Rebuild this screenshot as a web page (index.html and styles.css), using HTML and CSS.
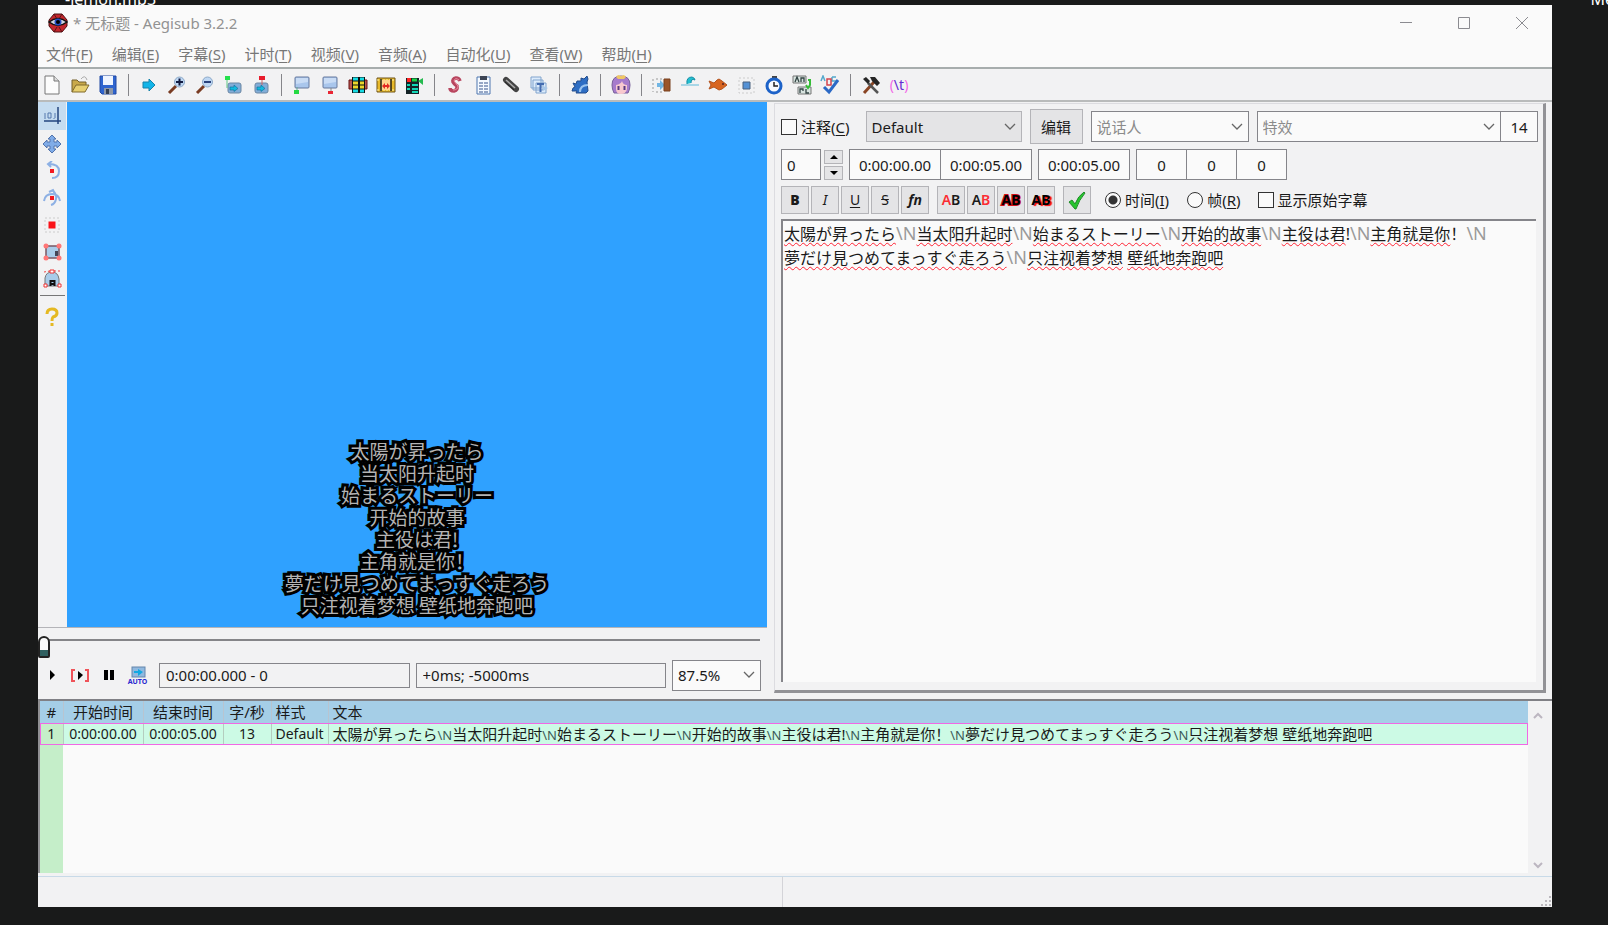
FILE: index.html
```html
<!DOCTYPE html>
<html lang="zh-CN">
<head>
<meta charset="utf-8">
<title>* 无标题 - Aegisub 3.2.2</title>
<link rel="stylesheet" href="styles.css">
</head>
<body>
<span class="desktop-label label-left">-lemon.mp3</span>
<span class="desktop-label label-right">Me</span>
<div class="window">
  <header class="titlebar">
    <svg class="logo" viewBox="0 0 20 20"><path d="M6 1h8l5 6v6l-5 6H6l-5-6V7z" fill="#c3262c" stroke="#4c1013"/><path d="M6 1l3 5M14 1l-3 5M6 19l3-5M14 19l-3-5" stroke="#5b1518"/><path d="M1 9q9-7 18 0-9 7-18 0z" fill="#cfd3dc" stroke="#111" stroke-width="1.500"/><circle cx="10" cy="9" r="3.500" fill="#2450c8"/><circle cx="10" cy="9" r="2" fill="#000"/></svg>
    <h1>* 无标题 - Aegisub 3.2.2</h1>
    <div class="captions">
      <button type="button" aria-label="最小化"><svg viewBox="0 0 12 12"><path d="M0 5.500h12"/></svg></button>
      <button type="button" aria-label="最大化"><svg viewBox="0 0 12 12"><path d="M.5.5h11v11H.5z"/></svg></button>
      <button type="button" aria-label="关闭"><svg viewBox="0 0 12 12"><path d="M0 0l12 12M12 0L0 12"/></svg></button>
    </div>
  </header>
  <nav class="menubar">
    <button type="button">文件(<u>F</u>)</button><button type="button">编辑(<u>E</u>)</button><button type="button">字幕(<u>S</u>)</button><button type="button">计时(<u>T</u>)</button><button type="button">视频(<u>V</u>)</button><button type="button">音频(<u>A</u>)</button><button type="button">自动化(<u>U</u>)</button><button type="button">查看(<u>W</u>)</button><button type="button">帮助(<u>H</u>)</button>
  </nav>
  <div class="toolbar" role="toolbar" aria-label="工具栏">
    <button type="button" aria-label="新建"><svg viewBox="0 0 20 20"><path d="M3 1h9l5 5v13H3z" fill="#fcfcfc" stroke="#777"/><path d="M12 1v5h5" fill="#ddd" stroke="#777"/></svg></button>
    <button type="button" aria-label="打开"><svg viewBox="0 0 20 20"><path d="M2 17V5h5l2 2h7v3" fill="#c9a94a" stroke="#75602b"/><path d="M2 17l4-7h13l-4 7z" fill="#e7cf70" stroke="#806a2d"/><path d="M11 4q4-5 6 1" fill="none" stroke="#aaa"/></svg></button>
    <button type="button" aria-label="保存"><svg viewBox="0 0 20 20"><path d="M2 1h16v18H4l-2-2z" fill="#2e64cf" stroke="#2149a2"/><path d="M5 1h10v9H5z" fill="#eef4ff"/><path d="M6 13h9v6H6z" fill="#8e98a8"/><path d="M8 14h3v5H8z" fill="#333f55"/></svg></button>
    <i class="sep"></i>
    <button type="button" aria-label="跳转"><svg viewBox="0 0 20 20"><path d="M4 7h6V4l6 6-6 6v-3H4z" fill="#12b4e8" stroke="#1682a9"/></svg></button>
    <button type="button" aria-label="放大"><svg viewBox="0 0 20 20"><path d="M2 18l7-7" stroke="#793b22" stroke-width="3"/><circle cx="12.500" cy="7" r="5" fill="#bed7f3" stroke="#8eaac8"/><path d="M12.500 3.500v7M9 7h7" stroke="#111a40" stroke-width="2"/></svg></button>
    <button type="button" aria-label="缩小"><svg viewBox="0 0 20 20"><path d="M2 18l7-7" stroke="#793b22" stroke-width="3"/><circle cx="12.500" cy="7" r="5" fill="#bed7f3" stroke="#8eaac8"/><path d="M9 7h7" stroke="#29417c" stroke-width="2"/></svg></button>
    <button type="button" aria-label="视频至开始"><svg viewBox="0 0 20 20"><rect x="5" y="8" width="13" height="10" rx="2" fill="#81add8" stroke="#6c87a3"/><path d="M7 12h4v-2l4 3.500-4 3V15H7z" fill="#12b9df" stroke="#126a94" stroke-width=".6"/><path d="M4 3v10" stroke="#60c886"/><path d="M2 1h5v4H2z" fill="#24e04c"/></svg></button>
    <button type="button" aria-label="视频至结束"><svg viewBox="0 0 20 20"><rect x="4" y="8" width="13" height="10" rx="2" fill="#81add8" stroke="#6c87a3"/><path d="M6 12h4v-2l4 3.500-4 3V15H6z" fill="#12b9df" stroke="#126a94" stroke-width=".6"/><path d="M11 3v7" stroke="#c66"/><path d="M8 1h6v4H8z" fill="#e81c2c"/></svg></button>
    <i class="sep"></i>
    <button type="button" aria-label="设开始"><svg viewBox="0 0 20 20"><rect x="3" y="2" width="14" height="11" rx="1" fill="#a9c6ec" stroke="#66789c"/><path d="M4 3h12v4L4 9z" fill="#c9dcf5"/><path d="M5 12v6" stroke="#6a9"/><path d="M2 15h5v4H2z" fill="#24d942"/></svg></button>
    <button type="button" aria-label="设结束"><svg viewBox="0 0 20 20"><rect x="3" y="2" width="14" height="11" rx="1" fill="#a9c6ec" stroke="#66789c"/><path d="M4 3h12v4L4 9z" fill="#c9dcf5"/><path d="M11 13v5" stroke="#888"/><path d="M8 16h5v3H8z" fill="#e92634"/></svg></button>
    <button type="button" aria-label="选择可见"><svg viewBox="0 0 20 20"><path d="M1 5h18v9H1z" fill="#b95850" stroke="#611"/><path d="M4 2h13v16H4z" fill="#111"/><path d="M5 4h5M12 4h4M5 16h5M12 16h4" stroke="#18dce4" stroke-width="3"/><path d="M5 8h5M5 12h5M12 8h4M12 12h4" stroke="#ead72c" stroke-width="3"/></svg></button>
    <button type="button" aria-label="对齐场景"><svg viewBox="0 0 20 20"><path d="M1 3h18v14H1z" fill="#e8b92b" stroke="#6e5419"/><path d="M1 5h18M1 15h18" stroke="#fff2a4" stroke-dasharray="2 1"/><path d="M5 5h10v10H5z" fill="#ffd48e"/><path d="M5 4v12M15 4v12" stroke="#262014" stroke-width="1.500"/><path d="M6 11l3-3v2h2V8l3 3-3 3v-2H9v2z" fill="#e32924"/></svg></button>
    <button type="button" aria-label="平移至视频"><svg viewBox="0 0 20 20"><path d="M2 3h13v16H2z" fill="#152326"/><path d="M3 5h4" stroke="#f22" stroke-width="4"/><path d="M8 5h5" stroke="#16d446" stroke-width="3"/><path d="M3 10h3M8 10h6M3 14h3M8 14h6M8 17h6" stroke="#12d7b7" stroke-width="2"/><path d="M19 3v7l-5-4z" fill="#25ba4f"/></svg></button>
    <i class="sep"></i>
    <button type="button" aria-label="样式"><svg viewBox="0 0 20 20"><path d="M15 6q-1-3-4-3-4 1-3 4 1 2 4 4 1 4-3 5-4 0-4-3" fill="none" stroke="#b8465f" stroke-width="3.500"/><path d="M14 5q-4-3-5 1l4 5q0 4-5 4" fill="none" stroke="#ec93a6"/></svg></button>
    <button type="button" aria-label="属性"><svg viewBox="0 0 20 20"><path d="M4 2h13v17H4z" fill="#f5faff" stroke="#4f77af"/><path d="M7 1h7v4H7z" fill="#3c4454"/><path d="M6 8h9M6 11h9M6 14h9M6 17h9" stroke="#36558c" stroke-dasharray="4 1"/></svg></button>
    <button type="button" aria-label="附件"><svg viewBox="0 0 20 20"><path d="M5 5l10 9" stroke="#444" stroke-width="6" stroke-linecap="round"/><path d="M5 5l9 8" stroke="#aaa" stroke-width="1.500"/><path d="M4 7l9 8" stroke="#222"/></svg></button>
    <button type="button" aria-label="字体"><svg viewBox="0 0 20 20"><path d="M2 2h10v11H2zM4 5h10v10H4zM7 8h10v10H7z" fill="#dcebfb" stroke="#81a4cd"/><path d="M8 9h7M11.500 9v8" stroke="#446cb0" stroke-width="2"/><path d="M14 11l5 2-5 3z" fill="#a8c8e9"/></svg></button>
    <i class="sep"></i>
    <button type="button" aria-label="自动化"><svg viewBox="0 0 20 20"><path d="M3 8l3 1 1-3 4 0V3l3 1 3-3 1 3-1 3 1 9-2 2H6l1-2H2l1-3 2-1z" fill="#2e6ec4" stroke="#234d8c"/><path d="M10 17q0-7 8-7" fill="none" stroke="#9bc4ee" stroke-width="2"/></svg></button>
    <i class="sep"></i>
    <button type="button" aria-label="助手"><svg viewBox="0 0 20 20"><path d="M10 1q9 0 9 9 0 4-2 8H3q-2-4-2-8 0-9 9-9z" fill="#a67bcc" stroke="#78609a"/><path d="M5 2l2-2 3 1 3-1 2 2-2 2H7z" fill="#efc666"/><path d="M5 10q5-1 6-4 1 4 5 4v4q-1 5-6 5t-5-5z" fill="#f8c9cf"/><path d="M7.500 11v4M13.500 11v4" stroke="#593b82" stroke-width="2"/></svg></button>
    <i class="sep"></i>
    <button type="button" aria-label="平移时间"><svg viewBox="0 0 20 20"><path d="M1 4v13M4 4h7M4 17h7" stroke="#999" stroke-dasharray="2 2"/><path d="M5 8h3V5l5 5-5 5v-3H5z" fill="#72b6e4"/><path d="M12 4h6v12h-6z" fill="#9b562b" stroke="#78401e"/></svg></button>
    <button type="button" aria-label="样式助手"><svg viewBox="0 0 20 20"><path d="M1 9h18v2H1z" fill="#a8d6e6"/><path d="M7 9q-1-7 5-7 3 1 3 3-4-2-4 3" fill="#22bfd1" stroke="#188fa5"/></svg></button>
    <button type="button" aria-label="翻译助手"><svg viewBox="0 0 20 20"><path d="M1 6l5 2 3-3 2-1 3 2 5 4-5 4-3 1-5-3-5 2 2-4z" fill="#d86520" stroke="#b3541f"/><circle cx="15" cy="9" r="1" fill="#522"/></svg></button>
    <button type="button" aria-label="重采样"><svg viewBox="0 0 20 20"><path d="M3 3h15v15H3z" fill="none" stroke="#ccc" stroke-dasharray="2 2"/><path d="M7 7h7v7H7z" fill="#5491d5" stroke="#48617f"/></svg></button>
    <button type="button" aria-label="时间后续"><svg viewBox="0 0 20 20"><path d="M8 1h5v3H8z" fill="#444"/><circle cx="10" cy="11" r="7" fill="#f8fbff" stroke="#1c62c8" stroke-width="3"/><path d="M10 7v4h4" fill="none" stroke="#222" stroke-width="1.500"/></svg></button>
    <button type="button" aria-label="假名计时"><svg viewBox="0 0 20 20"><path d="M1 1h13v7H1zM6 12h13v7H6z" fill="#d7e3df" stroke="#777"/><path d="M3 7l2-5 2 5M9 7V3h3v4M8 18v-4h3v2M14 14v4h3" fill="none" stroke="#344" stroke-width="1.300"/><path d="M16 5h2v5l-2 3-2-3" fill="none" stroke="#35bd38" stroke-width="2"/></svg></button>
    <button type="button" aria-label="拼写检查"><svg viewBox="0 0 20 20"><path d="M1 6l2-5 2 5M12 2h4M12 2v4h4" fill="none" stroke="#54a8cc" stroke-width="1.500"/><path d="M7 4h4v6H7z" fill="none" stroke="#d3444e" stroke-width="1.500"/><path d="M4 12l5 5L18 5" fill="none" stroke="#2b69c5" stroke-width="3"/></svg></button>
    <i class="sep"></i>
    <button type="button" aria-label="选项"><svg viewBox="0 0 20 20"><path d="M3 18L13 7" stroke="#8a4524" stroke-width="3"/><path d="M7 8l10 10" stroke="#555" stroke-width="2.500"/><path d="M9 2h5l5 6-3 3-5-5zM2 4l5 5 2-3-4-4z" fill="#252525"/></svg></button>
    <button type="button" class="tag-button" aria-label="切换标签显示"><span>(</span><b>\t</b><span>)</span></button>
  </div>

  <main class="work">
    <section class="video-panel">
      <div class="video-row">
        <div class="visual-tools" role="toolbar" aria-label="可视化工具">
          <button type="button" class="active" aria-label="坐标"><svg viewBox="0 0 20 20"><path d="M16 1v17M2 15h17" stroke="#24457f" stroke-width="1.500"/><path d="M3 7v6M6 7h3v5H6zM12 12v1M13 7v5" fill="none" stroke="#5579ad"/></svg></button>
          <button type="button" aria-label="移动"><svg viewBox="0 0 20 20"><path d="M10 1l4 4h-2v3h3V6l4 4-4 4v-2h-3v3h2l-4 4-4-4h2v-3H5v2l-4-4 4-4v2h3V5H6z" fill="#80ace8" stroke="#5274ad"/></svg></button>
          <button type="button" aria-label="Z 轴旋转"><svg viewBox="0 0 20 20"><path d="M7 3q10 0 10 7t-7 7M10 0L6 3l3 3" fill="none" stroke="#8db0e4" stroke-width="2"/><path d="M8 8h4v4H8z" fill="#f31920"/></svg></button>
          <button type="button" aria-label="XY 旋转"><svg viewBox="0 0 20 20"><path d="M2 13Q3 6 10 6t8 7M10 2q5 4 4 9-1 5-5 6M7 4l4-2 2 4" fill="none" stroke="#8db0e4" stroke-width="2"/><path d="M8 8h4v4H8z" fill="#f31920"/></svg></button>
          <button type="button" aria-label="缩放"><svg viewBox="0 0 20 20"><path d="M3 3h14v14H3z" fill="none" stroke="#ccc" stroke-dasharray="2 2"/><path d="M6.500 6.500h7v7h-7z" fill="#fa1218"/></svg></button>
          <button type="button" aria-label="矩形遮罩"><svg viewBox="0 0 20 20"><path d="M4 4h13v12H4z" fill="#a9cce9" stroke="#795763" stroke-width="1.500"/><path d="M13 9h3v5h-3z" fill="#445"/><g fill="#ff7777"><circle cx="4" cy="4" r="2.500"/><circle cx="17" cy="4" r="2.500"/><circle cx="4" cy="16" r="2.500"/><circle cx="17" cy="16" r="2.500"/></g></svg></button>
          <button type="button" aria-label="矢量遮罩"><svg viewBox="0 0 20 20"><path d="M3 17V9q1-6 7-6t7 7v7z" fill="#a9cce9" stroke="#777"/><path d="M2 3l6-1M12 2h6" stroke="#e44" stroke-dasharray="2 2"/><path d="M8 1h4v3H8zM2 15h3v3H2zM16 15h3v3h-3z" fill="#fff" stroke="#e33"/><path d="M8.500 17v-5h4v5M8.500 15h4" fill="none" stroke="#111" stroke-width="2"/></svg></button>
          <i class="hsep"></i>
          <button type="button" aria-label="帮助"><svg viewBox="0 0 20 20"><path d="M5 7q0-5 5-5t5 4q0 3-4 4-1 1-1 4" fill="none" stroke="#e5b922" stroke-width="3"/><path d="M8.500 16h3v3h-3z" fill="#e5b922"/></svg></button>
        </div>
        <div class="video">
          <p>太陽が昇ったら<br>当太阳升起时<br>始まるストーリー<br>开始的故事<br>主役は君!<br>主角就是你！<br>夢だけ見つめてまっすぐ走ろう<br>只注视着梦想 壁纸地奔跑吧</p>
        </div>
      </div>
      <input class="seek" type="range" min="0" max="100" value="0" aria-label="视频位置">
      <div class="playback">
        <button type="button" class="play" aria-label="播放"><svg viewBox="0 0 20 20"><path d="M8 5l5 5-5 5z" fill="#000"/></svg></button>
        <button type="button" aria-label="播放当前行"><svg viewBox="0 0 20 20"><path d="M5 5H2v11h3M15 5h3v11h-3" fill="none" stroke="#ef5359" stroke-width="2"/><path d="M8 6l5 4-5 5z" fill="#000"/></svg></button>
        <button type="button" aria-label="暂停"><svg viewBox="0 0 20 20"><path d="M5 5h4v10H5zM11 5h4v10h-4z" fill="#000"/></svg></button>
        <button type="button" class="auto" aria-label="自动跳转"><svg viewBox="0 0 20 12"><rect x="4" y="1" width="13" height="10" fill="#91b9df" stroke="#6586ac"/><path d="M6 5h4V3l5 3-5 4V7H6z" fill="#13a9e2"/></svg><span>AUTO</span></button>
        <input type="text" class="readout" readonly value="0:00:00.000 - 0" aria-label="当前时间">
        <input type="text" class="readout" readonly value="+0ms; -5000ms" aria-label="相对时间">
        <select class="zoom" aria-label="缩放比例"><option>87.5%</option></select>
      </div>
    </section>

    <form class="edit-panel">
      <div class="row row-style">
        <label class="check"><input type="checkbox"><span>注释(<u>C</u>)</span></label>
        <select class="style-select" aria-label="样式"><option>Default</option></select>
        <button type="button" class="edit-style">编辑</button>
        <select class="actor" aria-label="说话人"><option>说话人</option></select>
        <div class="joined effect-group">
          <select class="effect" aria-label="特效"><option>特效</option></select>
          <input class="count" type="text" readonly value="14" aria-label="每行字数">
        </div>
      </div>
      <div class="row row-time">
        <div class="spinner">
          <input type="text" value="0" aria-label="层次">
          <div class="spin-buttons"><button type="button" aria-label="增加"><svg viewBox="0 0 8 4"><path d="M0 4l4-4 4 4z"/></svg></button><button type="button" aria-label="减少"><svg viewBox="0 0 8 4"><path d="M0 0l4 4 4-4z"/></svg></button></div>
        </div>
        <div class="joined"><input class="time" type="text" value="0:00:00.00" aria-label="开始时间"><input class="time" type="text" value="0:00:05.00" aria-label="结束时间"></div>
        <input class="time" type="text" value="0:00:05.00" aria-label="持续时间">
        <div class="joined"><input class="margin" type="text" value="0" aria-label="左边距"><input class="margin" type="text" value="0" aria-label="右边距"><input class="margin" type="text" value="0" aria-label="垂直边距"></div>
      </div>
      <div class="row row-format">
        <div class="buttons"><button type="button"><b>B</b></button><button type="button"><em>I</em></button><button type="button"><u>U</u></button><button type="button"><s>S</s></button><button type="button"><em class="fn">fn</em></button></div>
        <div class="buttons colors"><button type="button"><i>A</i>B</button><button type="button">A<i>B</i></button><button type="button" class="outlined">AB</button><button type="button" class="shadowed">AB</button></div>
        <button type="button" class="commit" aria-label="提交"><svg viewBox="0 0 20 20"><path d="M2 11l3-2 3 4q3-8 9-12l1 1q-6 7-9 16H8z" fill="#25c52d" stroke="#208c29"/></svg></button>
        <label class="radio"><input type="radio" name="unit" checked><span>时间(<u>I</u>)</span></label>
        <label class="radio"><input type="radio" name="unit"><span>帧(<u>R</u>)</span></label>
        <label class="check"><input type="checkbox"><span>显示原始字幕</span></label>
      </div>
      <div class="script" role="textbox" aria-multiline="true" aria-label="字幕文本" contenteditable="true" spellcheck="false"><span class="typo">太陽が昇ったら</span><span class="brk">\N</span><span class="typo">当太阳升起时</span><span class="brk">\N</span><span class="typo">始まるストーリー</span><span class="brk">\N</span><span class="typo">开始的故事</span><span class="brk">\N</span><span class="typo">主役は君</span>!<span class="brk">\N</span><span class="typo">主角就是你</span>！<span class="brk">\N</span><br><span class="typo">夢だけ見つめてまっすぐ走ろう</span><span class="brk">\N</span><span class="typo">只注视着梦想</span> <span class="typo">壁纸地奔跑吧</span></div>
    </form>
  </main>

  <section class="grid">
    <div class="grid-body">
      <table>
        <colgroup><col class="c-num"><col class="c-time"><col class="c-time"><col class="c-cps"><col class="c-style"><col></colgroup>
        <thead><tr><th>#</th><th>开始时间</th><th>结束时间</th><th>字/秒</th><th class="start">样式</th><th class="start">文本</th></tr></thead>
        <tbody><tr><td>1</td><td>0:00:00.00</td><td>0:00:05.00</td><td>13</td><td class="start">Default</td><td class="start line-text">太陽が昇ったら<span>\N</span>当太阳升起时<span>\N</span>始まるストーリー<span>\N</span>开始的故事<span>\N</span>主役は君!<span>\N</span>主角就是你！<span>\N</span>夢だけ見つめてまっすぐ走ろう<span>\N</span>只注视着梦想 壁纸地奔跑吧</td></tr></tbody>
      </table>
    </div>
    <div class="scrollbar">
      <button type="button" aria-label="向上滚动"><svg viewBox="0 0 10 7"><path d="M1 6l4-4 4 4"/></svg></button>
      <button type="button" aria-label="向下滚动"><svg viewBox="0 0 10 7"><path d="M1 1l4 4 4-4"/></svg></button>
    </div>
  </section>
  <footer class="status"><div></div><div><svg viewBox="0 0 12 12"><path d="M9 1h2v2H9zM9 5h2v2H9zM9 9h2v2H9zM5 5h2v2H5zM5 9h2v2H5zM1 9h2v2H1z" fill="#bbb8bd"/></svg></div></footer>
</div>
</body>
</html>
```

FILE: styles.css
```css
* { box-sizing: border-box; }

:root {
  --face: #f2f2f3;
  --paper: #fafafa;
  --line: #85858a;
  --soft: #b4b4b8;
}

body {
  margin: 0;
  min-height: 100vh;
  padding: 5px 56px 18px 38px;
  display: flex;
  background: #191a1a;
  color: #1a1a1a;
  font-family: "Noto Sans", "Noto Sans CJK SC", sans-serif;
  font-size: 15px;
  line-height: 20px;
  overflow: hidden;
}

button, input, select {
  margin: 0;
  padding: 0;
  font: inherit;
  color: inherit;
  border-radius: 0;
}

button { border: 0; background: none; }
u { text-underline-offset: 2px; }

.desktop-label {
  position: absolute;
  top: -11px;
  color: #fff;
  font-size: 16px;
}
.label-left { left: 65px; }
.label-right { right: -6px; }

.window {
  position: relative;
  flex: 1;
  min-width: 0;
  display: flex;
  flex-direction: column;
  background: var(--face);
}

/* title and menus */
.titlebar {
  display: flex;
  align-items: center;
  height: 36px;
  padding: 0 1px 0 10px;
  gap: 5px;
  background: var(--paper);
}
.logo { width: 20px; height: 20px; }
h1 { flex: 1; margin: 0; font-size: 15px; font-weight: 400; color: #929292; }
.captions { display: flex; }
.captions button { width: 58px; height: 36px; }
.captions svg { width: 12px; height: 12px; fill: none; stroke: #8b8b90; }

.menubar {
  display: flex;
  gap: 19px;
  height: 28px;
  padding: 0 8px;
  background: var(--paper);
  border-bottom: 2px solid #a7adad;
  color: #777;
}

/* main toolbar */
.toolbar {
  display: flex;
  align-items: center;
  height: 33px;
  border-bottom: 2px solid #b9bbbb;
}
.toolbar button { width: 28px; height: 28px; display: flex; align-items: center; justify-content: center; }
.toolbar svg { width: 20px; height: 20px; }
.sep { width: 1px; height: 22px; margin: 0 6px; background: #85858a; }
.toolbar .tag-button { font-size: 14px; color: #f268e8; }
.tag-button b { color: #6529d2; font-weight: 400; }

.work { display: flex; }

/* video */
.video-panel { flex: 0 0 736px; padding: 0 7px 7px 0; }
.video-row { display: flex; border-bottom: 1px solid var(--soft); }
.visual-tools { width: 29px; }
.visual-tools button { width: 28px; height: 27px; display: flex; align-items: center; justify-content: center; }
.visual-tools .active { height: 28px; background: #c5dcf0; }
.visual-tools svg { width: 20px; height: 20px; }
.hsep { display: block; height: 1px; margin: 3px 2px 7px; background: #777; }

.video {
  flex: 1;
  aspect-ratio: 4 / 3;
  display: flex;
  align-items: flex-end;
  justify-content: center;
  background: #2fa1ff;
}
.video p {
  margin: 0;
  padding-bottom: 11px;
  text-align: center;
  font-family: "Noto Sans CJK JP", sans-serif;
  font-size: 19px;
  line-height: 22px;
  color: #b4b4b4;
  -webkit-text-stroke: 6px #000;
  paint-order: stroke fill;
}

.seek {
  display: block;
  appearance: none;
  width: 722px;
  height: 30px;
  padding-top: 8px;
  background: linear-gradient(#858588, #858588) 8px 11px / 100% 2px no-repeat;
}
.seek::-webkit-slider-thumb {
  appearance: none;
  width: 12px;
  height: 22px;
  border: 2px solid #222;
  border-radius: 6px 6px 2px 2px;
  background: linear-gradient(#fafafa 12px, #306060 12px);
}

.playback {
  display: flex;
  align-items: center;
  height: 34px;
}
.playback button { width: 29px; height: 28px; display: flex; flex-direction: column; align-items: center; justify-content: center; }
.playback .play { width: 27px; }
.playback svg { width: 20px; height: 20px; }
.playback .auto svg { height: 12px; }
.auto span { font-size: 7px; font-weight: 700; line-height: 7px; color: #2a2ad0; }
.readout {
  flex: 1;
  min-width: 0;
  height: 25px;
  margin-left: 6px;
  padding: 0 6px;
  border: 1px solid var(--line);
  background: var(--face);
}
.playback button + .readout { margin-left: 7px; }

select {
  appearance: none;
  height: 31px;
  padding: 0 24px 0 5px;
  border: 1px solid var(--line);
  background: var(--paper) url("data:image/svg+xml,%3Csvg xmlns='http://www.w3.org/2000/svg' width='12' height='8'%3E%3Cpath d='M1 1l5 5 5-5' fill='none' stroke='%23666' stroke-width='1.300'/%3E%3C/svg%3E") right 5px center no-repeat;
}
.zoom { width: 89px; margin: 0 6px; }

/* edit box */
.edit-panel {
  flex: 1;
  min-width: 0;
  display: flex;
  flex-direction: column;
  gap: 5px;
  margin: 1px 6px 6px 0;
  padding: 5px 5px 8px 6px;
  border: 1px solid #dcdce0;
  border-right: 3px solid #929296;
  border-bottom: 3px solid #929296;
}
.row { display: flex; align-items: center; }
.row-style { gap: 8px; height: 35px; }
.row-time { gap: 6px; height: 31px; }
.row-format { gap: 8px; height: 28px; margin-top: 1px; }

.check, .radio { display: flex; align-items: center; gap: 4px; white-space: nowrap; }
.check input, .radio input {
  appearance: none;
  width: 16px;
  height: 16px;
  border: 1px solid #333;
  background: var(--paper);
}
.radio input { border-radius: 50%; }
.radio input:checked { background: radial-gradient(circle, #333 0 4px, #fafafa 5px); }
.radio { margin-left: 6px; }
.radio + .radio { margin-left: 10px; }
.row-format .check { margin-left: 9px; }

.style-select { width: 156px; margin-left: 8px; background-color: #e4e4e6; border-color: var(--soft); }
.edit-style, .buttons button, .commit, .spin-buttons button {
  border: 1px solid var(--soft);
  background: #e4e4e6;
}
.edit-style { width: 53px; height: 35px; }
.actor { width: 158px; color: #8b8b8b; }
.effect-group { flex: 1; min-width: 0; }
.effect { flex: 1; color: #8b8b8b; }
.count { width: 38px; text-align: center; }
.joined { display: flex; }
.joined > * + * { margin-left: -1px; }
.edit-panel input[type="text"] {
  height: 31px;
  border: 1px solid var(--line);
  background: var(--paper);
  text-align: center;
}
.spinner { display: flex; gap: 3px; }
.edit-panel .spinner input { width: 40px; padding-left: 5px; text-align: left; }
.spin-buttons { display: flex; flex-direction: column; gap: 2px; justify-content: center; }
.spin-buttons button { width: 19px; height: 14px; display: flex; align-items: center; justify-content: center; }
.spin-buttons svg { width: 8px; height: 4px; }
.edit-panel .time { width: 92px; }
.edit-panel .margin { width: 51px; }

.buttons { display: flex; gap: 2px; }
.buttons button, .commit { width: 28px; height: 28px; font-size: 14px; }
.buttons b { font-weight: 900; }
.fn { font-weight: 700; }
.colors button { font-weight: 600; }
.colors i { font-style: normal; color: #fb2c33; }
.colors .outlined { font-weight: 700; color: #000; -webkit-text-stroke: 2px #d41018; paint-order: stroke fill; }
.colors .shadowed { font-weight: 700; color: #000; text-shadow: 2px 1px 1px #f00; }
.commit svg { width: 20px; height: 20px; vertical-align: middle; }

.script {
  flex: 1;
  margin-right: 2px;
  padding: 1px;
  border-top: 2px solid var(--line);
  border-left: 2px solid var(--line);
  background: var(--paper);
  font-size: 16px;
  line-height: 24px;
  outline: 0;
}
.typo { text-decoration: underline wavy #f23 1px; text-underline-offset: 2px; text-decoration-skip-ink: none; }
.brk { color: #9a9a9a; font-size: 18px; line-height: 20px; }

/* subtitle grid */
.grid {
  flex: 1;
  display: flex;
  border-top: 2px solid #808085;
  border-left: 2px solid #909093;
}
.grid-body {
  flex: 1;
  min-width: 0;
  background: linear-gradient(90deg, #c5eec9 23px, var(--paper) 23px);
}
table { width: 100%; table-layout: fixed; border-collapse: collapse; }
.c-num { width: 23px; }
.c-time { width: 80px; }
.c-cps { width: 48px; }
.c-style { width: 57px; }
th, td { height: 22px; padding: 0; text-align: center; font-weight: 400; line-height: 20px; white-space: nowrap; }
th { background: #a5cee7; border-right: 1px solid #b8c4d0; }
td { font-size: 14px; background: #ccfae5; border-right: 1px solid #b4cdbf; }
td:first-child { background: #c5eec9; }
th:last-child, td:last-child { border-right: 0; }
th.start, td.start { padding-left: 4px; text-align: left; }
td.line-text { font-size: 15px; }
.line-text span { font-size: 13px; color: #3c5a58; }
tbody tr { outline: 1px solid #f068e4; outline-offset: -1px; }

.scrollbar {
  width: 24px;
  display: flex;
  flex-direction: column;
  justify-content: space-between;
  padding: 2px 4px 4px 0;
}
.scrollbar button { height: 16px; }
.scrollbar svg { width: 10px; height: 7px; fill: none; stroke: #bcb6c0; stroke-width: 2; }

.status {
  display: flex;
  height: 34px;
  padding-top: 3px;
}
.status div { flex: 1; display: flex; justify-content: flex-end; align-items: flex-end; border-top: 1px solid #c8dae8; }
.status div:first-child { flex: 0 0 745px; border-right: 1px solid #d4d4d8; }
.status svg { width: 12px; height: 12px; }
```
